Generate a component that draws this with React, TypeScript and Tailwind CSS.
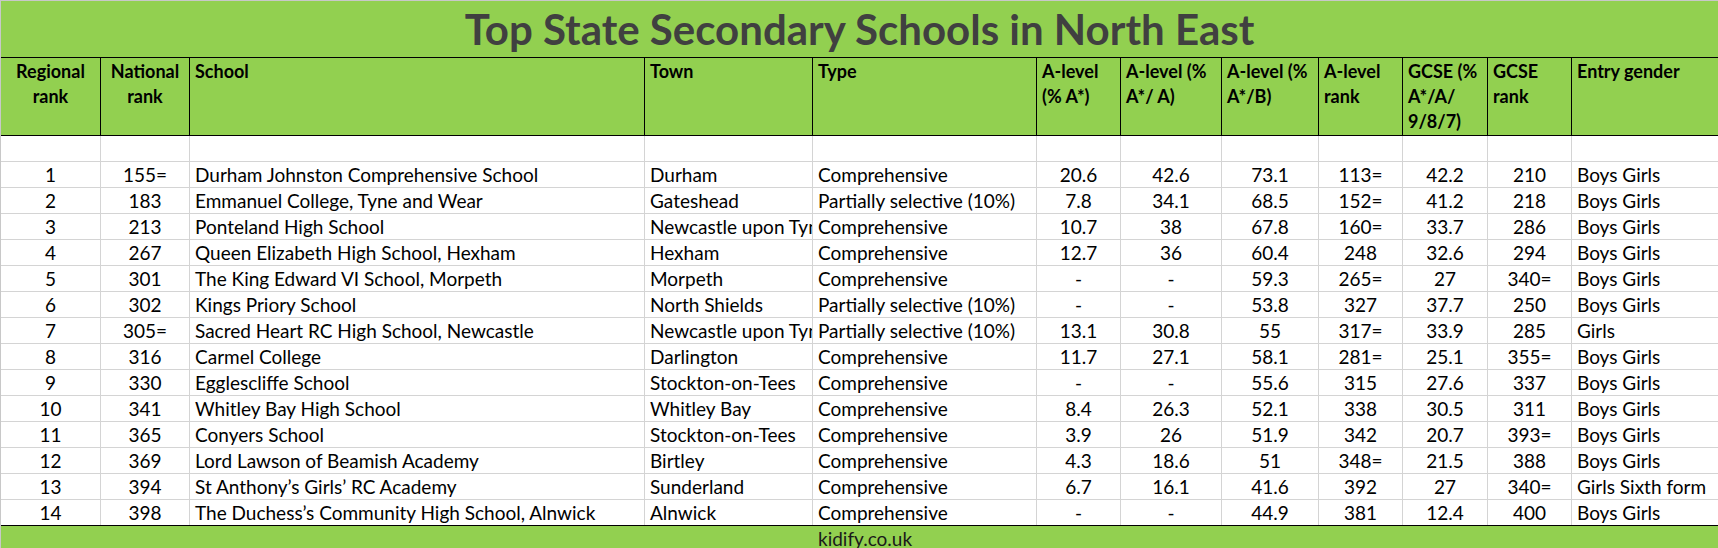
const widths = [
  'w-[100px]',
  'w-[89px]',
  'w-[455px]',
  'w-[168px]',
  'w-[224px]',
  'w-[84px]',
  'w-[101px]',
  'w-[97px]',
  'w-[84px]',
  'w-[85px]',
  'w-[84px]',
  'w-[147px]',
];

const centred = [0, 1, 5, 6, 7, 8, 9, 10];

const headers: React.ReactNode[] = [
  <>Regional<br />rank</>,
  <>National<br />rank</>,
  'School',
  'Town',
  'Type',
  <>A-level<br />(% A*)</>,
  <>A-level (%<br />A*/ A)</>,
  <>A-level (%<br />A*/B)</>,
  <>A-level<br />rank</>,
  <>GCSE (%<br />A*/A/<br />9/8/7)</>,
  <>GCSE<br />rank</>,
  'Entry gender',
];

const rows: string[][] = [
  ['1', '155=', 'Durham Johnston Comprehensive School', 'Durham', 'Comprehensive', '20.6', '42.6', '73.1', '113=', '42.2', '210', 'Boys Girls'],
  ['2', '183', 'Emmanuel College, Tyne and Wear', 'Gateshead', 'Partially selective (10%)', '7.8', '34.1', '68.5', '152=', '41.2', '218', 'Boys Girls'],
  ['3', '213', 'Ponteland High School', 'Newcastle upon Tyne', 'Comprehensive', '10.7', '38', '67.8', '160=', '33.7', '286', 'Boys Girls'],
  ['4', '267', 'Queen Elizabeth High School, Hexham', 'Hexham', 'Comprehensive', '12.7', '36', '60.4', '248', '32.6', '294', 'Boys Girls'],
  ['5', '301', 'The King Edward VI School, Morpeth', 'Morpeth', 'Comprehensive', '-', '-', '59.3', '265=', '27', '340=', 'Boys Girls'],
  ['6', '302', 'Kings Priory School', 'North Shields', 'Partially selective (10%)', '-', '-', '53.8', '327', '37.7', '250', 'Boys Girls'],
  ['7', '305=', 'Sacred Heart RC High School, Newcastle', 'Newcastle upon Tyne', 'Partially selective (10%)', '13.1', '30.8', '55', '317=', '33.9', '285', 'Girls'],
  ['8', '316', 'Carmel College', 'Darlington', 'Comprehensive', '11.7', '27.1', '58.1', '281=', '25.1', '355=', 'Boys Girls'],
  ['9', '330', 'Egglescliffe School', 'Stockton-on-Tees', 'Comprehensive', '-', '-', '55.6', '315', '27.6', '337', 'Boys Girls'],
  ['10', '341', 'Whitley Bay High School', 'Whitley Bay', 'Comprehensive', '8.4', '26.3', '52.1', '338', '30.5', '311', 'Boys Girls'],
  ['11', '365', 'Conyers School', 'Stockton-on-Tees', 'Comprehensive', '3.9', '26', '51.9', '342', '20.7', '393=', 'Boys Girls'],
  ['12', '369', 'Lord Lawson of Beamish Academy', 'Birtley', 'Comprehensive', '4.3', '18.6', '51', '348=', '21.5', '388', 'Boys Girls'],
  ['13', '394', 'St Anthony’s Girls’ RC Academy', 'Sunderland', 'Comprehensive', '6.7', '16.1', '41.6', '392', '27', '340=', 'Girls Sixth form'],
  ['14', '398', 'The Duchess’s Community High School, Alnwick', 'Alnwick', 'Comprehensive', '-', '-', '44.9', '381', '12.4', '400', 'Boys Girls'],
];

function Cell({ i, children }: { i: number; children?: React.ReactNode }) {
  const last = i === widths.length - 1;
  return (
    <div
      className={`${widths[i]} shrink-0 h-full ${last ? '' : 'border-r'} border-[#d4d4d4] overflow-hidden whitespace-nowrap leading-[25px] ${
        centred.includes(i) ? 'text-center' : 'pl-[5px] text-left'
      }`}
    >
      {children}
    </div>
  );
}

export default function App() {
  return (
    <div className="w-[1718px] h-[548px] overflow-hidden bg-white border-t border-l border-[#c8c8c8] font-['Lato',sans-serif] text-[19px] text-black">
      {/* title band */}
      <div className="h-[57px] bg-[#92d050] border-b border-black flex items-start justify-center">
        <h1 className="font-bold text-[42px] leading-[56px] text-[#404040]">
          Top State Secondary Schools in North East
        </h1>
      </div>

      {/* header row */}
      <div className="flex h-[78px] bg-[#92d050] border-b border-black font-bold text-[18px]">
        {headers.map((h, i) => (
          <div
            key={i}
            className={`${widths[i]} shrink-0 ${i === widths.length - 1 ? '' : 'border-r'} border-black pt-[1px] leading-[25px] ${
              i < 2 ? 'text-center' : 'pl-[5px]'
            }`}
          >
            {h}
          </div>
        ))}
      </div>

      {/* blank spacer row */}
      <div className="flex h-[26px] border-b border-[#d4d4d4]">
        {widths.map((_, i) => (
          <Cell key={i} i={i} />
        ))}
      </div>

      {rows.map((r, ri) => (
        <div
          key={ri}
          className={`flex h-[26px] ${ri === rows.length - 1 ? 'border-b border-black' : 'border-b border-[#d4d4d4]'}`}
        >
          {r.map((v, i) => (
            <Cell key={i} i={i}>
              {v}
            </Cell>
          ))}
        </div>
      ))}

      {/* footer */}
      <div className="flex h-[26px] bg-[#92d050]">
        <div className="w-[812px] shrink-0" />
        <div className="pl-[5px] leading-[25px] text-[#1a1a1a]">kidify.co.uk</div>
      </div>
    </div>
  );
}
